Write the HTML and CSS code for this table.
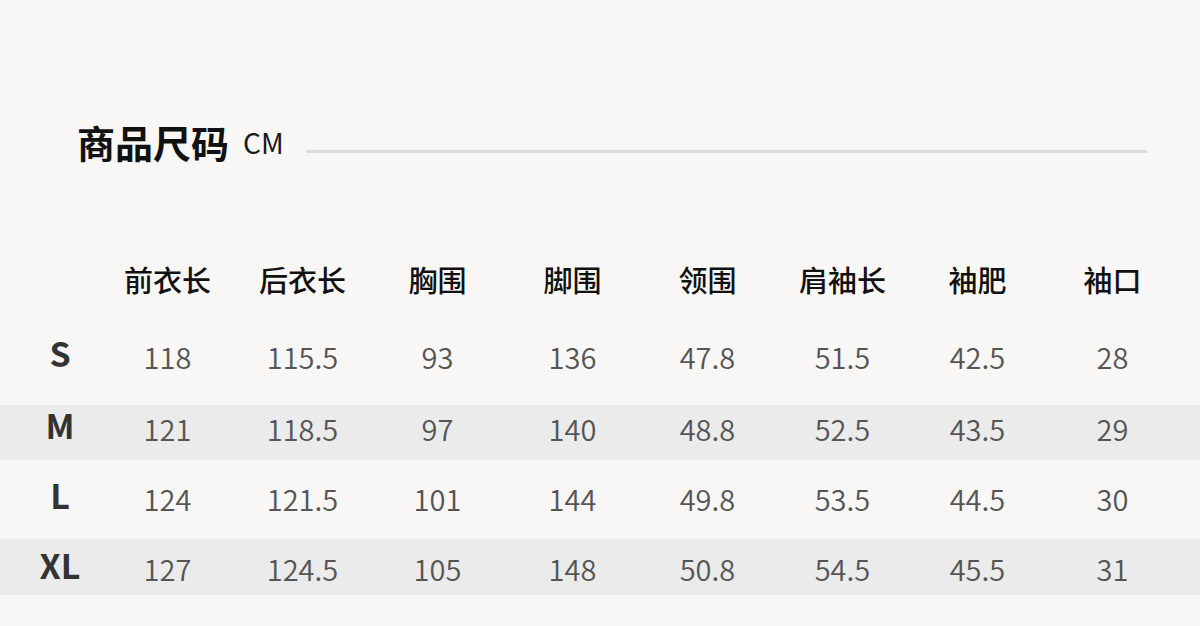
FILE: index.html
```html
<!DOCTYPE html>
<html lang="zh-CN">
<head>
<meta charset="utf-8">
<title>商品尺码</title>
<link rel="stylesheet" href="styles.css">
</head>
<body>
<div class="page">
  <div class="title-bar">
    <h1 class="title">商品尺码<span class="unit">CM</span></h1>
    <div class="rule"></div>
  </div>
  <div class="table">
    <div class="row head">
      <div class="size"></div>
      <div class="cell">前衣长</div>
      <div class="cell">后衣长</div>
      <div class="cell">胸围</div>
      <div class="cell">脚围</div>
      <div class="cell">领围</div>
      <div class="cell">肩袖长</div>
      <div class="cell">袖肥</div>
      <div class="cell">袖口</div>
    </div>
    <div class="row r-s">
      <div class="size">S</div>
      <div class="cell">118</div><div class="cell">115.5</div><div class="cell">93</div><div class="cell">136</div>
      <div class="cell">47.8</div><div class="cell">51.5</div><div class="cell">42.5</div><div class="cell">28</div>
    </div>
    <div class="row r-m stripe">
      <div class="size">M</div>
      <div class="cell">121</div><div class="cell">118.5</div><div class="cell">97</div><div class="cell">140</div>
      <div class="cell">48.8</div><div class="cell">52.5</div><div class="cell">43.5</div><div class="cell">29</div>
    </div>
    <div class="row r-l">
      <div class="size">L</div>
      <div class="cell">124</div><div class="cell">121.5</div><div class="cell">101</div><div class="cell">144</div>
      <div class="cell">49.8</div><div class="cell">53.5</div><div class="cell">44.5</div><div class="cell">30</div>
    </div>
    <div class="row r-xl stripe">
      <div class="size">XL</div>
      <div class="cell">127</div><div class="cell">124.5</div><div class="cell">105</div><div class="cell">148</div>
      <div class="cell">50.8</div><div class="cell">54.5</div><div class="cell">45.5</div><div class="cell">31</div>
    </div>
  </div>
</div>
</body>
</html>
```

FILE: styles.css
```css
html, body {
  margin: 0;
  padding: 0;
  background: #f8f7f5;
}
body {
  font-family: "Noto Sans CJK SC", "Noto Sans", sans-serif;
  width: 1200px;
  height: 626px;
  overflow: hidden;
}
.page {
  padding-top: 122px;
}
.title-bar {
  display: flex;
  align-items: center;
  height: 40px;
  padding-left: 77px;
  padding-right: 53px;
}
.title {
  margin: 0;
  font-size: 38px;
  line-height: 40px;
  font-weight: 700;
  color: #111;
  white-space: nowrap;
  display: flex;
  align-items: center;
}
.unit {
  font-size: 28px;
  font-weight: 400;
  margin-left: 14px;
  color: #1a1a1a;
}
.rule {
  flex: 1;
  height: 3px;
  background: #dddcda;
  margin-left: 22px;
  align-self: flex-end;
  margin-bottom: 9px;
}
.table {
  margin-top: 87px;
}
.row {
  display: grid;
  grid-template-columns: 80px repeat(8, 135px);
  padding-left: 20px;
  align-items: center;
  box-sizing: border-box;
}
.row.stripe {
  background: #ebebeb;
}
.head { height: 60px; }
.r-s { height: 96px; padding-bottom: 3px; }
.r-m { height: 55px; padding-bottom: 14px; }
.r-l { height: 79px; padding-bottom: 3px; }
.r-xl { height: 56px; padding-top: 2px; }
.cell {
  text-align: center;
  font-size: 29px;
  line-height: 40px;
  font-weight: 350;
  color: #555;
  white-space: nowrap;
}
.head .cell {
  font-weight: 500;
  color: #111;
  font-size: 29px;
}
.size {
  text-align: center;
  font-size: 34px;
  line-height: 40px;
  font-weight: 700;
  color: #333;
  margin-bottom: 6px;
}
```
